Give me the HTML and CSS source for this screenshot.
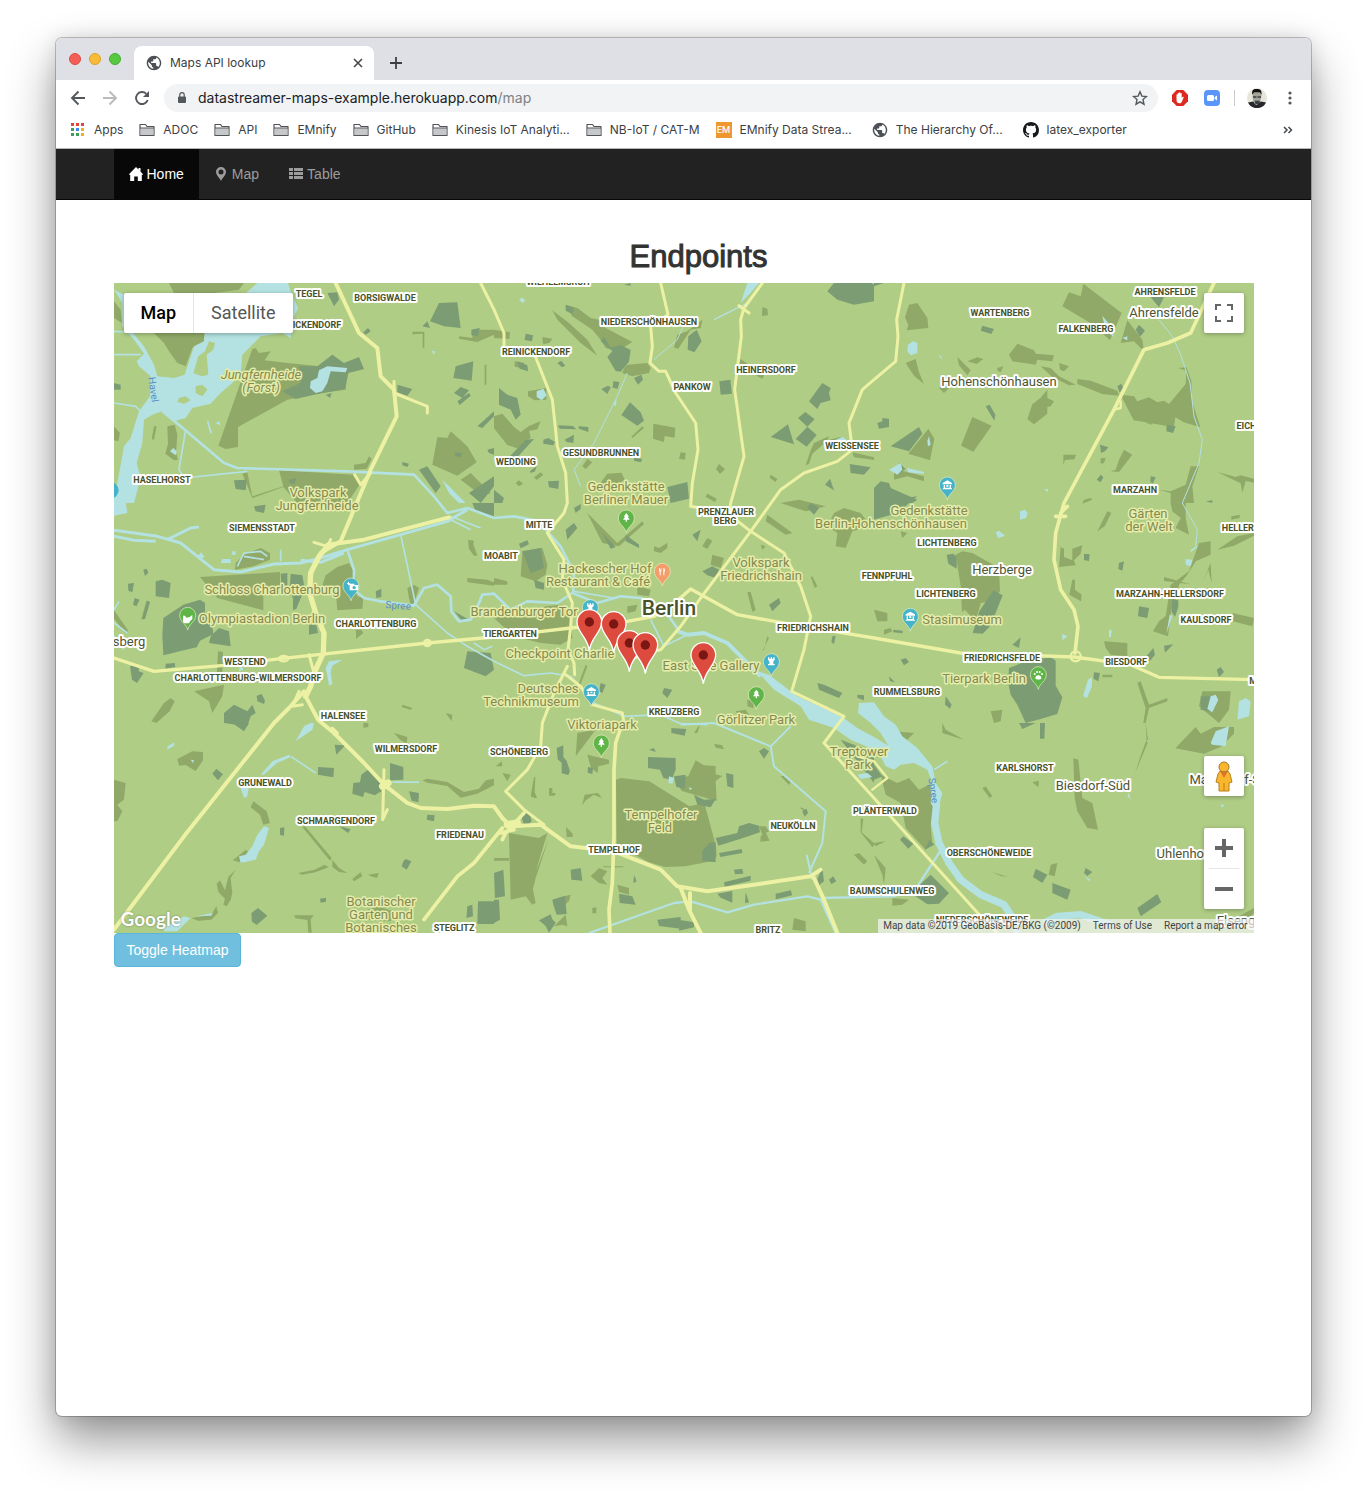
FILE: index.html
```html
<!DOCTYPE html>
<html lang="en">
<head>
<meta charset="utf-8">
<meta name="viewport" content="width=device-width, initial-scale=1">
<title>Maps API lookup</title>
<link rel="stylesheet" href="styles.css">
</head>
<body>
<svg class="defs" width="0" height="0" aria-hidden="true">
  <symbol id="globe" viewBox="1 1 22 22"><path fill="#4d5156" d="M12 2C6.480 2 2 6.480 2 12s4.480 10 10 10 10-4.480 10-10S17.520 2 12 2zm-1 17.930c-3.950-.49-7-3.850-7-7.930 0-.62.08-1.210.21-1.790L9 15v1c0 1.100.9 2 2 2v1.930zm6.900-2.540c-.26-.81-1-1.390-1.900-1.390h-1v-3c0-.55-.45-1-1-1H8v-2h2c.55 0 1-.45 1-1V7h2c1.100 0 2-.9 2-2v-.41c2.930 1.190 5 4.060 5 7.410 0 2.080-.8 3.970-2.100 5.390z"/></symbol>
  <symbol id="folder" viewBox="0 0 16 14"><path d="M1 12.500V1.500h5.500l1.500 2h7v9z" fill="#fff" stroke="#505357" stroke-width="1.200" stroke-linejoin="round"/><path d="M1.600 5.300h12.800v6.600H1.600z" fill="#c6c7c9"/><path d="M1 5h14" stroke="#505357"/></symbol>
  <symbol id="pin" viewBox="-30 -30 60 80" overflow="visible"><path d="M0 44C-4 25-24 20-24 0A24 24 0 0 1 24 0C24 20 4 25 0 44z" stroke="#e9f0c4" stroke-width="2"/></symbol>
  <symbol id="marker" overflow="visible"><path d="M0 0C-5-42-37-54-37-86A37 37 0 0 1 37-86C37-54 5-42 0 0z" fill="#dd4b3e" stroke="#fff" stroke-width="4"/><circle cy="-86" r="14" fill="#7a1712"/></symbol>
</svg>

<div class="window">
  <header class="chrome">
    <div class="tabstrip">
      <div class="lights"><span class="light red"></span><span class="light amber"></span><span class="light green"></span></div>
      <div class="tab">
        <svg width="16" height="16"><use href="#globe"/></svg>
        <span class="tab-title">Maps API lookup</span>
        <button class="plain" aria-label="Close tab"><svg width="10" height="10" viewBox="0 0 10 10"><path d="M1 1l8 8M9 1L1 9" stroke="#45494d" stroke-width="1.600"/></svg></button>
      </div>
      <button class="plain new-tab" aria-label="New tab"><svg width="12" height="12" viewBox="0 0 12 12"><path d="M6 0v12M0 6h12" stroke="#3c4043" stroke-width="1.800"/></svg></button>
    </div>
    <div class="toolbar">
      <button class="plain" aria-label="Back"><svg width="16" height="16" viewBox="0 0 16 16"><path d="M15 8H2M8.500 1.500L2 8l6.500 6.500" fill="none" stroke="#54585d" stroke-width="1.900"/></svg></button>
      <button class="plain" aria-label="Forward"><svg width="16" height="16" viewBox="0 0 16 16"><path d="M1 8h13M7.500 1.500L14 8l-6.500 6.500" fill="none" stroke="#b9bbbe" stroke-width="1.900"/></svg></button>
      <button class="plain" aria-label="Reload"><svg width="16" height="16" viewBox="0 0 16 16"><path d="M13.700 10A6 6 0 1 1 12.300 3.800" fill="none" stroke="#54585d" stroke-width="1.900"/><path d="M15 1v6H9z" fill="#54585d"/></svg></button>
      <div class="omnibox">
        <svg width="12" height="14" viewBox="0 0 12 14"><path d="M3 5.500h6a1 1 0 0 1 1 1V11a1 1 0 0 1-1 1H3a1 1 0 0 1-1-1V6.500a1 1 0 0 1 1-1z" fill="#54585d"/><path d="M3.800 6V3.800a2.200 2.200 0 0 1 4.400 0V6" fill="none" stroke="#54585d" stroke-width="1.200"/></svg>
        <span class="url">datastreamer-maps-example.herokuapp.com<span class="path">/map</span></span>
        <button class="plain" aria-label="Bookmark this page"><svg width="16" height="16" viewBox="0 0 16 16"><path d="M8 1.800l1.900 4.300 4.600.4-3.500 3.100 1 4.600-4-2.400-4 2.400 1-4.600-3.500-3.100 4.600-.4z" fill="none" stroke="#54585d" stroke-width="1.400"/></svg></button>
      </div>
      <div class="extensions">
        <svg width="16" height="16" viewBox="0 0 16 16"><path d="M4.700 0h6.600L16 4.700v6.600L11.300 16H4.700L0 11.300V4.700z" fill="#dc2a22"/><path d="M4.500 8.500V5c0-1 1.200-1 1.200 0V3.600c0-1 1.300-1 1.300 0V3c0-1 1.400-1 1.400 0v.8c0-1 1.300-1 1.300 0V8l.8-1c.8-.7 1.500 0 1 .8L10 11.600C9.300 13 8.700 13.300 7.500 13.300 5.500 13.300 4.500 12 4.500 10z" fill="#fff"/></svg>
        <svg width="16" height="16" viewBox="0 0 16 16"><rect width="16" height="16" rx="4" fill="#5a95f8"/><rect x="3" y="5" width="7" height="6" rx="1.500" fill="#fff"/><path d="M10.600 7.200L13 5.400v5.200l-2.400-1.800z" fill="#fff"/></svg>
        <span class="divider"></span>
        <svg width="20" height="20" viewBox="0 0 20 20"><circle cx="10" cy="10" r="10" fill="#e8e6db"/><path d="M1 14.500l5-1 4 2 4-2 5 1A10 10 0 0 1 1 14.500z" fill="#26282b"/><path d="M5.500 5c0 7 1 11 4 12 3-1 5-5 5-12z" fill="#a3a59b"/><path d="M5 6.500C5 0 8 1 10 1c3 0 5 1 4.500 5.500L13 4.500H7z" fill="#111"/><path d="M6 8.200h3.500v1.500H6zM10.500 8.200H14v1.500h-3.500zM7.500 12.800h5.500L12 16H8.500z" fill="#3c3e40"/></svg>
        <button class="plain" aria-label="Browser menu"><svg width="16" height="16" viewBox="0 0 16 16"><g fill="#54585d"><circle cx="8" cy="3" r="1.600"/><circle cx="8" cy="8" r="1.600"/><circle cx="8" cy="13" r="1.600"/></g></svg></button>
      </div>
    </div>
    <nav class="bookmarks" aria-label="Bookmarks">
      <a href="#" class="apps"><svg width="14" height="14" viewBox="0 0 14 14"><path d="M0 0h3v3H0zM5 0h3v3H5zM10 0h3v3h-3z" fill="#e5443a"/><path d="M0 5h3v3H0zM0 10h3v3H0zM5 10h3v3H5z" fill="#3f9e55"/><path d="M5 5h3v3H5z" fill="#4386f2"/><path d="M10 5h3v3h-3zM10 10h3v3h-3z" fill="#eeb021"/></svg>Apps</a>
      <a href="#"><svg width="16" height="14"><use href="#folder"/></svg>ADOC</a>
      <a href="#"><svg width="16" height="14"><use href="#folder"/></svg>API</a>
      <a href="#"><svg width="16" height="14"><use href="#folder"/></svg>EMnify</a>
      <a href="#"><svg width="16" height="14"><use href="#folder"/></svg>GitHub</a>
      <a href="#"><svg width="16" height="14"><use href="#folder"/></svg>Kinesis IoT Analyti...</a>
      <a href="#"><svg width="16" height="14"><use href="#folder"/></svg>NB-IoT / CAT-M</a>
      <a href="#" class="site"><span class="em">EM</span>EMnify Data Strea...</a>
      <a href="#" class="site"><svg width="16" height="16"><use href="#globe"/></svg>The Hierarchy Of...</a>
      <a href="#"><svg width="16" height="16" viewBox="0 0 16 16"><path fill="#17191c" d="M8 0C3.580 0 0 3.580 0 8c0 3.540 2.290 6.530 5.470 7.590.4.070.55-.17.55-.38 0-.19-.01-.82-.01-1.490-2.010.37-2.530-.49-2.690-.94-.09-.23-.48-.94-.82-1.130-.28-.15-.68-.52-.01-.53.63-.01 1.080.58 1.230.82.72 1.210 1.870.87 2.330.66.07-.52.28-.87.51-1.070-1.780-.2-3.640-.89-3.640-3.950 0-.87.31-1.590.82-2.150-.08-.2-.36-1.020.08-2.120 0 0 .67-.21 2.200.82.64-.18 1.320-.27 2-.27s1.360.09 2 .27c1.530-1.040 2.200-.82 2.200-.82.44 1.100.16 1.920.08 2.120.51.56.82 1.270.82 2.150 0 3.070-1.870 3.750-3.650 3.950.29.25.54.73.54 1.480 0 1.070-.01 1.930-.01 2.200 0 .21.15.46.55.38A8.010 8.010 0 0 0 16 8c0-4.420-3.580-8-8-8z"/></svg>latex_exporter</a>
      <button class="plain more" aria-label="More bookmarks"><svg width="10" height="8" viewBox="0 0 10 8"><path d="M1 1l3 3-3 3M5.500 1l3 3-3 3" fill="none" stroke="#45494d" stroke-width="1.500"/></svg></button>
    </nav>
  </header>

  <nav class="navbar" aria-label="Main">
    <div class="container nav-items">
      <a href="#" class="active"><svg width="14" height="14" viewBox="1 0 14 14"><path d="M8 0l2.500 2.500V1h2v3.500L15.500 7.700h-1.700V14H9.800V9.500H6.200V14h-4V7.700H.5z" fill="currentColor"/></svg>Home</a>
      <a href="#"><svg width="14" height="14" viewBox="0 0 14 14"><path fill-rule="evenodd" d="M7 0a5 5 0 0 1 5 5c0 3-3 5-5 9C5 10 2 8 2 5a5 5 0 0 1 5-5zm0 2.500a2.500 2.500 0 1 0 0 5 2.500 2.500 0 0 0 0-5z" fill="currentColor"/></svg>Map</a>
      <a href="#"><svg width="14" height="14" viewBox="0 0 14 14"><path d="M0 1h4v3H0zM5 1h9v3H5zM0 5h4v3H0zM5 5h9v3H5zM0 9h4v3H0zM5 9h9v3H5z" fill="currentColor"/></svg>Table</a>
    </div>
  </nav>

  <main class="container">
    <h1>Endpoints</h1>
    <div class="map">
      <svg class="map-canvas" viewBox="0 0 1140 650" preserveAspectRatio="xMidYMid slice" role="img" aria-label="Map of Berlin">
        <rect width="1140" height="650" fill="#afcd85"/>
        <svg width="1140" height="650" viewBox="0 0 3420 1950">
          <!-- open land and parks -->
          <g fill="#90a968">
            <path d="M165 0H390L375 20 300 30H180zM0 55L20 80 24 120 0 105zM120 150H272L270 175 235 195 215 250 190 240 165 205 150 180zM415 198L425 195 435 210 470 205 452 232 520 240 620 250 655 215 690 245 750 258 700 270 695 320 620 330 520 350 372 432V492L335 498 313 488zM120 430h8l-8 40-7-2zM160 430l22-5 8 30-4 55 6 20-12 2-26-20 8-30zM0 430l18 20-5 25-13-3zM495 562L720 575 740 600 700 660H550L508 612 415 645 385 572 400 568 415 640 508 610zM720 545l35-5 10-20 8 8-15 30-38 2zM970 462l30 3 10-20 50 45 28 48-58 40-75-33zM895 146h36v48h-5v-42l-30 2zM1035 160l40 5V140h65v15l-50 22-55-10zM1112 245h5v60h-5zM1040 590l30-20 60 60-25 10z"/>
            <g transform="translate(1140)"><path d="M215 65l35 10 40 30 25 5 20 25 80 42-45 28-35-10-15-25-25-30-60-40zM175 82l50 38 55 50 30 48-50-38-70-70zM0 140l48 8-2 20-46-3zM145 162l30 5-8 12-20 5zM62 235l30 5-10 15-20-4zM550 155l30-10 45-35-5 25-30 5-38 58-12-5zM400 245l60-5 10 15-5 15-50 10-30-10 5-15zM102 325l55-10v35l-35 2-20-12zM0 400l25-8 35 40 20 15 25-18 35-15-10 25-25 5 5 20-40 32-30-10-40-50zM478 422l66 12-2 30-30-5-2 18-33-10zM445 430l5 5-35 30-3-4zM340 572l42-3 10 20-30 25-42-15zM280 528l15 10-20 20-10-8zM560 508l15 2-2 20-18-3zM675 543l18 15-15 15-12-15zM140 568l8 8-20 15-8-8zM75 592l12 10-12 8-10-10zM830 575l20 12-5 10-18-12zM640 632l28 15-5 10-28-15zM805 72l15 5 2 20-18 2zM740 228l70 50-5 10-70-42zM960 480l45-20-5 12 40-10 20 25-10 10-20-12-40-3-35 30-10 30-10 5 15-45zM1075 508l65 15v8l-60-8z"/></g>
            <g transform="translate(2280)"><path d="M628 2l115 88-35 82-55-50-88-52 20-42 35 12zM760 112l45 58 5 35-30-30-40 5zM105 65l25-5 30 45 3 30-65 7 5-15-10-25zM95 240l30-12 10 40 15 35-30-25zM430 182l50 20 5 10 55 5-5 18-45-5-5 15-70-10-10-20zM500 250l30 5 25 25 50 25-20 2-50-25zM610 288l40 5 80 30 5 15-50-5-75-30zM740 335l40 5 10 15 35-12 25 15 20-5 15 10 50-60 2-40-25-8 25-2 15 40 2 60 25 80-50-15-25-15-5 35-15-8-105-18zM870 385h30v60l-22-5zM555 240l30 10-15 15-12-5zM250 222l40 40-10 15-25-30zM280 235l30-12 18 5-20 15zM370 255l18-5-8 18-10-5zM520 320v25l20 10-10 15-10 2v20l-40 32-20-15 15-45 25-20zM295 402l58 26-55 78-37-18zM163 437l18 30-13 65-65-20zM195 315l20-10 10 10-15 15zM568 515h38l-5 14-28 2-5 15zM750 500l25 15-40 52-25-2 15-5 10-30zM680 525h15l-5 15-10 2zM820 402l15 3-2 20-15-5zM950 550h25l-20 60 5 50h-70v-35l45-20zM1030 567l55 15 15-5 40 10v12l-25-5-10 35-5-28zM60 560l30 5 60 15v15l-50-15-40 10zM855 620l35 5v5zM630 650l20-5 5 5-30 12z"/></g>
            <g transform="translate(0 660)"><path d="M258 222l240-15v60l-50 5v50L310 285zM670 192l35-12 20 40 5 60 18 5-3 32-75 5-5-60-40-15 10-30zM365 180l25-25 50-20 28 15v20l-50 20-55 10zM0 322l42 60-5 10-37-45zM312 445l15 2-2 70h-17zM240 565l90-20-5 35-30 50-10-35zM150 600l20-15 12 10-15 30-40 35-15-5zM865 605l30 10-5 5-27-8zM995 630l20 5-2 20zM722 380h20l6 10-22 18v-25zM1062 110l18 3-2 10 12 35h-10l-15-20zM1060 225l60 5 20 8v10l-80-10zM880 255l20-10 15 10-15 45-10 5-5-20zM105 295l-18 55-5-2 15-55z"/></g>
            <g transform="translate(1140 660)"><path d="M85 145l60-10 15 50-5 30-30 20-45-15zM0 345l60-10 40 10 55-35 50-5 25 30 5 70-35 20-60-5-80-20zM280 30l90 90 75-65 5 8-75 67-50-10zM480 130l15 5 25-15v15l-20 15-20-5zM640 105l15 8-15 25-15-8zM655 155l35 10-10 30-30-10zM820 35l75 55-20 5-60-40zM1020 30l30-15 50 15 30 40-55 15-20 50-30-5 5-40-30-20zM860 0l55-10 80 20-60 15zM430 250l40 10-5 20-35-5zM400 310l30-5-5 20-25 5zM760 268l10-2 15 55-10 5zM950 222l5-2 15 30-8 5zM820 400l5 5-20 40 5-5zM0 225l40 10v10H0zM275 485l5 5-30 80-5-2zM760 590l20 5-2 20-18-5zM725 625l30-5 10 15-25 10zM800 125l15 5-10 10z"/></g>
            <g transform="translate(2280 660)"><path d="M245 155l20-10 30 5 80 45 3 70-23 30-35 5-8 30-10 20-30-30-8 8-4-80zM560 132l10 5v25l25 10v-35l30-10-5 25-20 20 5 15-50 5zM700 25l12 5-20 40-22 15zM595 230h8v30l20 15-2 20-35-20zM975 120l35-5v40l-45 20-25 40-25 30-8 40-15 35-10 80-45-15 18-30 20-15 15-95 55-40zM870 222l80 22-80-10zM1010 180l3 60-10-40-20 45zM690 415l70 5v40l-50-5-15-20zM1030 140l60-40 50-10v8l-60 30zM1075 330l65 15-5 25-60-15zM890 0h45v45l10 50-40-20 15-30-25-20zM0 320l40 10v25H10zM30 380l20-5 5 10-25 10zM985 565h85l-5 55-30 40-60-50zM790 540l10-5 25 70 55-20v10l-55 20-10 45h-7l7-45zM685 515h30v8h-30zM1072 40l25-5v10l-25 5zM80 85l20 5-15 15zM350 625l35-5-5 35-20 5z"/></g>
            <g transform="translate(0 1320)"><path d="M190 108l45-23 32 2v25l-22 32-30-18-20 2zM0 170l35 10-5 50-20 15 15 20-15 30H0zM418 235l40 30 10 35-20 5-10-30-28-22zM356 412l40-32 10 10-20 30zM365 440l-15 25 5 45-5 20-12 20-10-5 5-18-20-20-5-25 10-10 15 30 10-40zM232 585l60-10 15-25 5 20-20 20-40 3zM565 312l8-2 80 95-5 8zM655 410l20 25 25 15-25-3-20-15zM552 450l50-10 30-15 12 8-40 15-40 7zM715 468l25-20 5 12-25 15zM762 455l32-5-5 15-18-5zM925 172l15-5 60 10 50 30 45-10 20-25 25-5v20l-50 25-50 12-40-35-60-10zM840 30l40 12-2 20-20-12zM540 577h60l-10 12 3 40h-10l-3-38-35-5zM760 560l35-10 40 15-5 30-70-5zM748 0h15v12l-15 2z"/></g>
            <g transform="translate(1140 1320)"><path d="M366 170l15-5 85 10 120 75 45-10 35 130 2 30-15 15-80 15-60 2-50-15-95-50zM605 112l25 15 35 2v25l20 5-20 15 3 60-105-30-20-35 40-10zM45 330l90 15 25-15-30 100-15 60 10 50-10 5-20-25-45 10zM165 345l-40 120-20 80 15-85zM250 30l55-10-60 80zM280 95l65 15v12l-32 8-2 20-20-15zM272 215l40-5 12 15-25-10-25 18-10 15zM260 262l10 20zM370 485l35 10v20l-30-8zM290 460l25-25 25 10-15 20 15 20-25-5zM210 520l20-5-5 20-30 25zM215 575l5 35-15-5-25 5 15-15zM900 585l35 10v30l-40-5zM915 252l15 5 15 20zM800 340l15-12 12 25-28 3zM1080 395l15-5 25 25-10 10zM860 160l10-2 20 20-5 8zM660 62l25 5 5 12-25-5zM110 220l10-58h4l-2 45 7 18h-8zM5 130l18-15 2 15zM25 150l25 5-10 20zM165 195h10v15h10l-3 8h-17zM216 312l20 20v10h-18zM295 555l12-2v18h-12zM600 30l20-30-10 30zM328 430h60v3h-60zM0 405h45v8H0zM1100 285l8 3-5 40 40 35-8 10-35-45zM795 310h20l10 15-20 10z"/></g>
            <g transform="translate(2280 1320)"><path d="M20 155l50 25 35-15 30 35 30-15 15 60-10 65 5 50-20 20-60-65-15-75-45-25zM598 105l15 5 12 115 30 15 17 80-32-5-30-50-8-40zM965 12l15 20 40-20h60v20l-40 40-50 20-86-16zM205 0l10 20 55 30-65-20zM475 178l20-5-2 20zM325 195l10-5 20 30-8 5zM60 25l60 5-20 20-40-10zM355 448l45 13-20-2zM530 425l20-5-8 40-18-5zM0 360l35-5-30 15zM0 395l35 40-5 50-5-30zM55 525l50 5-20 15-30 3zM1075 590l65-35v15l-30 30-20 5zM815 0l8 55-25 60-15 35 20-60 15-40z"/></g>
          </g>
          <!-- woods and cemeteries -->
          <g fill="#7c9d74">
            <path d="M555 250h55l45-35 35 25 45-18 15 36-47 12-10 48-93 17-55 13-40-23 55-25zM948 115l27-55 55-2 10 77-50-5zM925 130l15-15 8 20zM1025 250l53-15-5 58-55-8zM1020 330l20-18 25 10-20 23zM1030 355l35-25 5 8-33 28zM640 30l30-2 5 22-15 20zM748 148l14-13 8 10-15 10zM850 305l45 13-15 20-30-10zM360 592l38-2-3 32-30-4zM1090 430l50-45v15l-35 35zM915 560l25-10 40 60-15 20zM1120 500l20-5v20l-15-5zM1065 630l75-50v30l-40 50zM635 335l18-5-5 15zM525 590l22-5-5 18-15-3zM865 537l20 5-5 10-15-5zM1072 140l25-5-5 25-20-3zM0 300l20 5v15H0zM1022 508l22 3-5 12-16-4z"/>
            <g transform="translate(1140)"><path d="M340 222l15-18-35-30 10-12 20 32 30-8 30 15-5 35-25 30-15-2zM215 65l25 10-5 18-20-10zM95 152l22 5-3 18-22-4zM15 315l25 20 30 10 10 50-15 15-15-30-35-15zM120 468l-50 55H45L95 470zM70 235l30 12 2 18-25-8zM190 240l12-7 12 15-10 5zM420 285l22-10 5 15-15 15zM322 318l20-10 8 5-10 20zM358 295l18 2-5 20-15-3zM408 358l32 30 10 25-20 15-48-32zM583 160l25-20 15 35-22 33-20-8zM676 295l33-5 5 42-34 3zM192 427l45 2 10 10-50-2zM253 430l30 2v15l-28-10zM212 470l28-15-2 25-20-3zM148 470l15-5 20 12-5 10-30-5zM162 595l33-2-2 25-28-5zM520 612l60-15 5 50-55 13zM945 355l40-55 25 15-5 15 5 22-30 8-10 18zM912 405l22-18 28 22-22 22zM830 462l52-38 18 60zM905 468l35-37 28 25-30 35zM1000 25l20-25h60l45-5 15 10v50l-60 10-50-15zM1067 543l63 10-20 22-40-5zM993 605l15-18 12 35zM420 525l25 3-5 10-20-5zM108 565l20-15-5 15-12 5zM0 620l30 25-5 15H0zM390 5l20-5v8z"/></g>
            <g transform="translate(2280)"><path d="M810 18l75-5-30 60zM325 128l35 10-8 15-32-10zM785 140l10-15 18 18-15 18zM50 490l85-58 10 20-40 53zM10 420l15-5v-10l20 2v25l-30 5zM335 370l12-5 17 30-3 18zM20 595l25 5 5 15 80 35-15 10H0v-45zM880 425l25 5-8 20-20-5zM678 485l25 8-10 12-12 5zM668 590l12-15 8 8-8 15zM830 580l15 3-8 18-8-3zM730 310l12-8 5 12-10 15zM75 540l20 18-15 10-10-12zM995 655l20-3v8zM0 0h30L0 10z"/></g>
            <g transform="translate(0 660)"><path d="M148 345l60-40 50-15 15 10v50l20 8 5 35-40 20-10 20-45 10-30 8-25 6-3-62zM125 235l20-5 25 10-5 45-40-5zM315 375l30 10 5 45-65-10 5-20zM42 242l18-2-5 28-12-5zM88 200l10-3 5 12-10 10zM62 285l15 5-10 20-10-5zM85 348l15-55 8 5-15 50zM48 490l28-5-2 20 15 5-20 30-15-10zM155 482l27-2 2 12-30 5zM330 630l30-25 40 20 15-20 10 25-15 10-10 30-70-10zM428 578l15-5 10 20-3 10-20-8zM530 212l35 5 7 40-25 60-10 5v-35l-10-30zM500 212l20-2v38l-18-5zM585 365h22l5 25-27 5zM785 265l17-8v25l-15 3zM1060 445l70 5 10 50-25 20-65-25zM1075 0h65v40l-55-15zM1020 325l45 25-20 5zM420 10l35-5-5 25-25-5z"/></g>
            <g transform="translate(1140 660)"><path d="M85 145l55-10 10 60-40 15zM215 80l25-20 10 15-30 35zM240 15l20-12v15l-15 12zM75 122l25-10 5 12-25 12zM325 90l40 42-15 5zM395 95l40 30v10l-40-20zM595 95l25-15-10 35zM625 205l30-15 20 10-10 25-25-8zM825 305l30-20 5 15-25 25zM940 15l10-15 25 15-15 20zM510 555l25 5-15 25-15-15zM320 540l15 5-10 25-10-5zM970 540l20 5 55 25-10 15-60-25zM1090 575l20 2v15l-20-8zM120 230l30 10v20l-25-5zM1015 400l10-2-5 25-8-5z"/></g>
            <g transform="translate(2280 660)"><path d="M405 495l50-20 75-12 15 10v75l20 35-15 50-50 15-45 12-25-55-20-30-8-38zM358 262l28 15-20 50-20 45-20 20-30-2 20-65zM218 155l20-3 10 10v35l-25-15zM630 152l17 2-2 20-15-3zM735 180l15-5-5 28-12-5zM795 310l30 5-5 30-28-5zM895 290l18 2v20l-10 30-10-15zM870 428l28-4-25 25zM808 470l30-35 5 20-15 18zM1028 500l12-8 10 15-15 15zM80 470l15-5 10 12-15 10zM45 520l18 18-15-3zM215 580l18 25-5 12-15-12zM415 425l25-22-5 32zM660 508l18 2-5 25-15-8zM980 580h30l-5 45-25-5zM0 0l130-20-60 50-70 20zM58 380l28 3v8l-28-3z"/></g>
            <g transform="translate(0 1320)"><path d="M295 152l12-15 20 17-15 18zM355 0h50l-15 25zM662 65l32 2-27 28zM612 132l48 3-2 28-46-8zM742 155l20-15 20 5 22 45-2 15-20 12-30-10-5 15-32-10 3-32 20-2zM828 120l40 12v38l-40 2zM885 205l30 5-2 28-20-5zM940 275l22 2-2 18-22-5zM498 315l13-2-1 25-12-2zM412 570l20-15 28 23-32 28-14-10zM618 527l18-3v12l-16 3zM868 415l7-7 17 7-14 25-15-10zM1060 550l15-5 2 35-20 5zM1092 535h48v68h-50zM675 310l35 8-8 12z"/></g>
            <g transform="translate(1140 1320)"><path d="M462 102l83 3v35l-12 30-25-5-10-25-36-5zM540 160l35-5-3 42-25-5-5-22zM600 215l30 15 35-2-15 25-40-8zM696 150l22 5v40l-18-5zM188 75l20-8v35l10 12 10 30-5 12-20-5v-32l-12-10zM282 132l15 3-2 18-14-4zM665 345l65-15 5-20 30-10 30 8 3 20-60 20-65 20zM675 390l68-12 2 12-66 12zM625 385l20-25 20-2v60l-40-5zM690 478l80-20v15l-78 18zM720 440l25-3 3 15-25 2zM755 508l10 30-12 2zM670 512l45-8v35l-35-15zM845 512l45-10 5 15-50 12zM375 512l40 8 10 25-48-5zM420 455l8 20-10 5zM230 440l30-5 5 38-33-3zM175 530l38-12 5 55-30 2-10-30zM135 592l35-18 5 15 10 10-20 30-10-20zM490 590l70-8v35l-65-8zM555 590l45 8v15l-45 10zM0 530h15l3 60-18 10zM0 450l28-10 5 80-30 5zM795 85l15-10 15 10-15 22zM925 265l12-8 5 12-10 12zM985 435l5 40-15 12-5-20zM1005 470l12-10 10 15-15 8zM532 15l45 3-5 20-40-8zM465 80l15-5 5 12zM80 275l25-10 8 30-20 20zM1040 50l40 15 60 25v90z"/></g>
            <g transform="translate(2280 1320)"><path d="M110 510l60-55 55 55-30 32-35 2zM485 437l35 18-15 25-28-18zM535 480l55 20-10 30-45-20zM630 450l5-15 20 12-15 12zM790 555l60-42 12 25-62 42zM78 350l10-10 30 22-15 15zM152 380l15-30 14 15zM498 0h15l-2 47h-13zM435 0h50l-40 18zM0 125l25 35-25 10z"/></g>
          </g>
          <!-- rivers, canals and lakes -->
          <g fill="#b4e1e1">
            <path d="M0 20L25 60V130L60 170 90 212 68 235 75 250 110 280 108 340 75 385 50 465 30 490 10 600 0 640V660H60L80 585 68 540 85 480 90 410 115 395 145 385 180 415 215 405 235 375 290 362 320 330 355 300 380 275 385 215 440 160 505 150 530 165 535 110 552 75 530 25 522 0H430L385 40 360 150H272L270 175 240 190 212 275 180 285 130 280 120 245 90 190 40 130V40zM640 250l60 5-5 13-45-3-10 35-15 25-20 5-17-15 2-20 20-10 5-23zM282 410l12 40-5 2-10-35zM305 422l10-8 5 12zM168 505l10-10 10 10-3 12zM953 203l10 2-3 10zM985 590l20 20 50 50h-20l-30-30z"/>
            <path fill="#afcd85" d="M285 175l18 5-5 20-20 15 5 60-20 5-25-10 15-50 20-15zM245 310l20-5 15 15-15 20-20-10zM195 345l20-5 15 12-20 10-20-5z"/>
            <path d="M1215 48l12-4 6 10-8 6zM1268 325l20-8 10 20-15 15-15-10zM1900 0h35l-25 30-30 30zM1500 358l8-10-2 18-5 4zM2165 470l20-8 15 10-10 8zM2382 185l15-10 13 5v30l-20 7-10-12zM2473 217l8 2 5 12zM2965 98l25 30 10 35-25-20zM3025 165l15-5v12zM2440 475l5-15 5 25-8 5zM2325 560l35-20 5 20-15 15zM2380 555l50 12v6l-48-5zM2790 620l12-3v10z"/>
            <path d="M2718 685l15-5 8 10-5 15-18 5zM2645 748l10-5 18 15-20 8zM3230 800l20-12v5l-20 15zM3215 828l20 2-5 20-15-5zM3175 998l-18 55 10-58zM2845 1052l15 8-15 12zM2922 1190l12-8v28l-15 35-12-5zM3290 1240l15-5 8 15-18 38-15-10zM3375 1255l20-10 15 10-5 45-35 10zM2985 1040h8l-2 22h-6zM635 1155l10-20 40-5-30 18-5 20 5 35-10 5-5-30zM375 1165l5-25 8 20zM325 828h25v12h-30zM355 805h10v10h-12zM250 820l12-12 10 15-20 5zM0 660l35-5 5 35-40 8z"/>
            <path d="M570 1330l20-10h10l-5 20-50 35zM440 1475l35-40 50-20 5 8-42 17-38 35zM380 1515l25-5-5 30-10 5zM450 1630l15 5-15 50-15 20-10 25-45 10-5-20 20-5 20-25 15-35zM160 1390l22-12-2 10-20 12zM230 1430l10 2-3 8zM248 1900l48-10-4 8zM150 1935l60-35 20 5-40 40h-40zM835 1495h80v5h-80zM680 1517l15 2zM1665 1480l15 5-5 17-12-2zM1725 1512l10 5-8 4z"/>
            <path d="M1930 1165L1965 1175 2050 1240 2140 1280 2190 1306 2230 1335 2280 1362 2330 1392 2320 1418 2280 1400 2210 1370 2160 1335 2085 1310 2060 1270 1980 1220zM2235 1260L2280 1258 2310 1300 2345 1325 2365 1360 2410 1395 2455 1450 2465 1500 2485 1530 2470 1590 2450 1560 2455 1500 2440 1460 2400 1440 2360 1445 2340 1460 2315 1450 2300 1420 2330 1400 2300 1350 2270 1320 2232 1290zM3290 1380l15-35 40-15-10 60-40-5zM3045 1530l5 20-10-12zM2910 1780l20 10-5 4zM3320 1568l5-5 5 5-5 5zM3100 1370l5 5-5 3zM2230 1475l30-5 15 12-35 6z"/>
          </g>
          <g fill="none" stroke="#b4e1e1" stroke-linejoin="round">
            <path stroke-width="8" d="M145 385L200 430 330 540 370 555 700 565 900 575 960 640 1000 690 1060 675 1140 705 1200 700 1280 715M1295 740L1340 790 1380 870 1377 930"/>
            <path stroke-width="5" d="M215 440L195 560 210 585 400 565M0 360L65 370 85 390M0 215L80 215M0 145L40 147M1010 700l90 35M1010 710l60 30M1380 925L1500 945"/>
            <path stroke-width="9" d="M0 742L130 760 200 780 250 820 300 860 380 867 480 843 560 840 620 825 700 800 860 755 1000 715 1060 680M0 760L60 772 125 775M160 770L230 735 255 732M560 832L620 838 690 810"/>
            <path stroke-width="8" d="M700 800L720 860V920L750 945 800 955 900 968 930 915 970 905 1010 940 1012 985 1035 1015 1070 1010 1095 960 1105 935 1140 932 1190 980 1240 955 1330 960 1375 930 1450 960 1520 940 1580 945 1650 980 1700 1050"/>
            <path stroke-width="12" d="M1690 1045L1720 1055 1770 1050 1840 1080 1940 1180"/>
            <path stroke-width="5" d="M860 755L905 965 1000 1050 1060 1090 1140 1135 1230 1178 1310 1170 1370 1180 1440 1260 1530 1300 1640 1295 1700 1322 1780 1325M1610 1010L1650 1090 1720 1055"/>
            <path stroke-width="6" d="M1700 1325L1800 1320 1970 1390 2030 1330M1970 1390L1980 1450 2135 1585 2125 1680 2085 1770M2078 1715L2095 1790"/>
            <path stroke-width="7" d="M1425 1950L1680 1860 1730 1855 1840 1888 1920 1865 2080 1840 2120 1850 2165 1950M2120 1845L2340 1840 2410 1810 2485 1695"/>
            <path stroke-width="22" d="M2468 1560L2462 1620 2475 1680 2505 1740 2540 1790 2600 1835 2670 1865 2700 1910 2710 1950M2790 1920L2830 1900 2900 1895 3000 1930"/>
            <path stroke-width="4" d="M1800 110L1860 80 1900 60"/>
            <path stroke-width="3" d="M1620 230L1690 170 1705 135M1540 270L1510 340 1440 480 1380 560 1400 610M3135 110L3175 160 3200 215 3228 300 3240 400 3265 470 3255 540 3205 660 3250 740 3245 790"/>
            <path stroke-width="5" d="M530 1420l60 40 15 10M370 850l20-40 50-5 20 15M390 820l60 10M0 980l15-25M0 1020l40 30M0 1060l30 40M1080 1080l30 20 25-10M2460 1460l40-25M500 800v35"/>
          </g>
          <!-- trunk roads -->
          <g fill="none" stroke="#edf1a4" stroke-linejoin="round" stroke-linecap="round">
            <path stroke-width="12" d="M665 0L735 150 790 195 800 280 840 320 848 400 770 560 680 775 620 810"/>
            <path stroke-width="9" d="M840 295V330L940 370V390M722 575L740 605 770 570M600 778L640 790 650 770"/>
            <path stroke-width="16" d="M640 790L615 820 590 870 587 930 605 990 630 1050 628 1110 605 1160 590 1210 575 1240"/>
            <path stroke-width="12" d="M640 785L750 770 1005 703M575 1240L612 1310 660 1350 750 1440 810 1505 880 1560 920 1575 1000 1578 1080 1568 1140 1570 1165 1605 1190 1630 1280 1625 1370 1690 1500 1705 1640 1760 1690 1810 1780 1825 1920 1805 2090 1780 2120 1760M570 1225L525 1275 480 1320 210 1660 0 1940"/>
            <path stroke-width="9" d="M555 1225L535 1270 565 1265M585 1115L600 1170M810 1460L806 1610 820 1580M655 1335L670 1350"/>
            <path stroke-width="10" d="M0 1125L120 1165 330 1147 500 1127 940 1080 1140 1062 1370 1035 1540 1015 1620 1000 1670 970 1730 918 1870 995 2020 1022 2280 1065 2540 1110 2880 1122 3050 1145 3135 1183 3420 1190"/>
            <path stroke-width="9" d="M1100 0L1140 80 1170 150V210H1260L1315 350 1330 490 1355 570 1360 660 1350 690 1300 750 1350 830 1345 890 1375 960 1370 1030 1362 1100 1380 1140 1382 1175M1360 1150L1320 1230 1285 1320 1280 1390 1240 1460 1175 1525 1230 1580 1290 1625M1355 1175L1400 1210 1435 1265 1525 1290 1530 1320"/>
            <path stroke-width="11" d="M1525 1320L1505 1380 1500 1460V1660L1495 1800 1485 1880 1488 1950M1165 1635L1080 1740 1030 1780 930 1910M1160 1650L1200 1640M1165 1670L1175 1650 1230 1590"/>
            <path stroke-width="9" d="M1640 0L1662 95 1610 130 1615 190 1608 240 1635 265H1655L1685 330 1745 420 1752 500 1735 600 1730 670 1840 690 1910 745 2010 810 2060 910 2090 1000 2070 1100 2033 1225 2190 1300 2130 1380 2280 1545 2600 1900 2650 1950"/>
            <path stroke-width="9" d="M1945 0L1890 75 1880 110 1882 160 1862 320 1890 520 1850 660 1845 700M1875 68L1905 90M2370 0L2348 110 2352 160 2345 235 2280 290 2245 320 2205 420 2215 500 2170 535 2070 570 2000 620 1910 745 1760 945 1700 1030 1640 1100 1560 1125"/>
            <path stroke-width="11" d="M3300 0L3230 150 3160 180 3090 200 3000 380 2850 660 2825 750 2820 830 2840 920 2880 980 2892 1030 2883 1110M2840 690L2860 670M2825 700h30"/>
            <path stroke-width="7" d="M3000 380l20-5v-20M2870 1120a15 15 0 1 0 30 0a15 15 0 1 0-30 0M495 1127a14 8 0 1 0 28 0a14 8 0 1 0-28 0M930 1080a10 9 0 1 0 20 0a10 9 0 1 0-20 0M2230 1420l50 15 40 50-45 35"/>
            <path stroke-width="12" d="M2100 1785L2130 1850 2170 1950M1700 1815L1725 1880 1760 1950M1728 1830V1880"/>
            <path stroke-width="22" d="M1180 1625L1210 1620M806 1510L822 1500"/>
          </g>
          <!-- points of interest -->
          <g fill="#45b3c9">
            <use href="#pin" x="2470" y="576" width="60" height="80"/><use href="#pin" x="681" y="879" width="60" height="80"/><use href="#pin" x="1399" y="944" width="60" height="80"/><use href="#pin" x="1402" y="1196" width="60" height="80"/><use href="#pin" x="1942" y="1106" width="60" height="80"/><use href="#pin" x="2359" y="970" width="60" height="80"/><circle cx="-10" cy="622" r="24"/>
          </g>
          <g fill="#5fb548">
            <use href="#pin" x="191" y="967" width="60" height="80"/><use href="#pin" x="1507" y="675" width="60" height="80"/><use href="#pin" x="1897" y="1205" width="60" height="80"/><use href="#pin" x="1432" y="1350" width="60" height="80"/><use href="#pin" x="2743" y="1145" width="60" height="80"/>
          </g>
          <g fill="#f59c6b"><use href="#pin" x="1615" y="835" width="60" height="80"/></g>
          <g fill="#fff" transform="translate(0 -2)">
            <path id="museum" d="M2500 594l14 8v4h-28v-4zM2489 608h4v8h14v-8h4v10h3v3h-28v-3h3zM2497 608h6v5h-6z"/>
            <use href="#museum" x="-1068" y="620"/><use href="#museum" x="-111" y="394"/>
            <path fill-rule="evenodd" d="M705 904h16v4h12v16h-26v-16h-2zM720 911a5 5 0 1 0 1 0zM699 902h3v-4h3v4h4v3h-4v4h-3v-4h-3z"/>
            <path d="M1419 963h4v4h4v-4h4v4h4v-4h4v8l-4 4v8h-12v-8l-4-4zM1962 1125h4v4h4v-4h4v4h4v-4h4v8l-4 4v8h4v4h-20v-4h4v-8l-4-4z"/>
            <path id="tree" d="M1537 692l8 11h-4l6 9h-8v6h-4v-6h-8l6-9h-4z"/>
            <use href="#tree" x="390" y="530"/><use href="#tree" x="-75" y="675"/>
            <path d="M207 1000h6l4 6 10-2 8-6v12l-6 6-4 7h-14l-4-5zM2764 1188c0-5 4-9 9-9s9 4 9 9-18 5-18 0z"/><circle cx="2762" cy="1175" r="3"/><circle cx="2769" cy="1169" r="3"/><circle cx="2777" cy="1169" r="3"/><circle cx="2784" cy="1175" r="3"/>
            <path d="M1636 857h2v6h2v-6h2v9l-2 2v11h-3v-11l-2-2zM1648 857c4 0 5 3 5 9l-2 3v10h-3z"/>
          </g>
        </svg>

        <g transform="translate(-114 -283)">
          <g class="poi" text-anchor="middle">
            <g font-style="italic"><text x="261" y="379">Jungfernheide</text><text x="261" y="392">(Forst)</text></g>
            <text x="318" y="497">Volkspark</text><text x="317" y="510">Jungfernheide</text>
            <text x="626" y="491">Gedenkstätte</text><text x="626" y="504">Berliner Mauer</text>
            <text x="272" y="594">Schloss Charlottenburg</text>
            <text x="262" y="623">Olympiastadion Berlin</text>
            <text x="605" y="573">Hackescher Hof</text><text x="598" y="586">Restaurant &amp; Café</text>
            <text x="524" y="616">Brandenburger Tor</text>
            <text x="560" y="658">Checkpoint Charlie</text>
            <text x="711" y="670">East Side Gallery</text>
            <text x="548" y="693">Deutsches</text><text x="531" y="706">Technikmuseum</text>
            <text x="602" y="729">Viktoriapark</text>
            <text x="756" y="724">Görlitzer Park</text>
            <text x="761" y="567">Volkspark</text><text x="761" y="580">Friedrichshain</text>
            <text x="929" y="515">Gedenkstätte</text><text x="891" y="528">Berlin-Hohenschönhausen</text>
            <text x="962" y="624">Stasimuseum</text>
            <text x="984" y="683">Tierpark Berlin</text>
            <text x="1148" y="518">Gärten</text><text x="1149" y="531">der Welt</text>
            <text x="859" y="756">Treptower</text><text x="858" y="769">Park</text>
            <text x="661" y="819">Tempelhofer</text><text x="660" y="832">Feld</text>
            <text x="381" y="906">Botanischer</text><text x="381" y="919">Garten und</text><text x="381" y="932">Botanisches</text>
          </g>
          <g class="river" text-anchor="middle">
            <text transform="translate(150 390) rotate(82)">Havel</text>
            <text transform="translate(398 609) rotate(4)">Spree</text>
            <text transform="translate(930 791) rotate(82)">Spree</text>
          </g>
          <g class="district" text-anchor="middle">
            <text x="309" y="297">TEGEL</text><text x="385" y="301">BORSIGWALDE</text><text x="307" y="328">REINICKENDORF</text><text x="162" y="483">HASELHORST</text>
            <text x="558" y="285">WILHELMSRUH</text><text x="649" y="325">NIEDERSCHÖNHAUSEN</text><text x="536" y="355">REINICKENDORF</text><text x="692" y="390">PANKOW</text><text x="766" y="373">HEINERSDORF</text>
            <text x="601" y="456">GESUNDBRUNNEN</text><text x="516" y="465">WEDDING</text><text x="852" y="449">WEISSENSEE</text>
            <text x="1000" y="316">WARTENBERG</text><text x="1165" y="295">AHRENSFELDE</text><text x="1086" y="332">FALKENBERG</text><text x="1249" y="429">EICHE</text><text x="1135" y="493">MARZAHN</text>
            <text x="262" y="531">SIEMENSSTADT</text><text x="539" y="528">MITTE</text><text x="501" y="559">MOABIT</text><text x="376" y="627">CHARLOTTENBURG</text><text x="510" y="637">TIERGARTEN</text>
            <text x="245" y="665">WESTEND</text><text x="248" y="681">CHARLOTTENBURG-WILMERSDORF</text><text x="343" y="719">HALENSEE</text>
            <text x="726" y="515">PRENZLAUER</text><text x="725" y="524">BERG</text><text x="813" y="631">FRIEDRICHSHAIN</text><text x="674" y="715">KREUZBERG</text>
            <text x="947" y="546">LICHTENBERG</text><text x="887" y="579">FENNPFUHL</text><text x="946" y="597">LICHTENBERG</text><text x="1170" y="597">MARZAHN-HELLERSDORF</text><text x="1206" y="623">KAULSDORF</text><text x="1252" y="531">HELLERSDORF</text>
            <text x="1002" y="661">FRIEDRICHSFELDE</text><text x="1126" y="665">BIESDORF</text><text x="907" y="695">RUMMELSBURG</text><text x="1276" y="684">MAHLSDORF</text>
            <text x="265" y="786">GRUNEWALD</text><text x="406" y="752">WILMERSDORF</text><text x="519" y="755">SCHÖNEBERG</text><text x="336" y="824">SCHMARGENDORF</text><text x="460" y="838">FRIEDENAU</text><text x="454" y="931">STEGLITZ</text>
            <text x="614" y="853">TEMPELHOF</text><text x="793" y="829">NEUKÖLLN</text><text x="768" y="933">BRITZ</text><text x="885" y="814">PLÄNTERWALD</text><text x="1025" y="771">KARLSHORST</text><text x="989" y="856">OBERSCHÖNEWEIDE</text><text x="892" y="894">BAUMSCHULENWEG</text><text x="982" y="923">NIEDERSCHÖNEWEIDE</text>
          </g>
          <g class="town" text-anchor="middle">
            <text x="1164" y="317">Ahrensfelde</text><text x="999" y="386">Hohenschönhausen</text><text x="1002" y="574">Herzberge</text><text x="1093" y="790">Biesdorf-Süd</text>
            <text x="129" y="646">sberg</text><text x="1232" y="784">Mahlsdorf-Süd</text><text x="1188" y="858">Uhlenhorst</text><text x="1249" y="925">Elsengrund</text>
          </g>
          <text class="city" x="669" y="615" text-anchor="middle">Berlin</text>
        </g>
        <svg width="1140" height="650" viewBox="0 0 3420 1950">
          <use href="#marker" x="1426" y="1103"/><use href="#marker" x="1499" y="1109"/><use href="#marker" x="1546" y="1166"/><use href="#marker" x="1594" y="1172"/><use href="#marker" x="1768" y="1202"/>
        </svg>
      </svg>

      <div class="map-types"><button class="on">Map</button><button>Satellite</button></div>
      <button class="control fullscreen" aria-label="Toggle fullscreen view"><svg width="18" height="18" viewBox="0 0 18 18"><path d="M1 6V1h5M12 1h5v5M17 12v5h-5M6 17H1v-5" fill="none" stroke="#666" stroke-width="2"/></svg></button>
      <button class="control pegman" aria-label="Street View"><svg width="18" height="31" viewBox="0 0 18 31"><path d="M5 10h8l2 3 2 8-3 1v8H4v-8l-3-1 2-8z" fill="#fab62d" stroke="#b8811b"/><path d="M5 10h8l-4 7z" fill="#e0722a"/><path d="M9 22v8" stroke="#b8811b"/><circle cx="9" cy="6" r="5" fill="#fab62d" stroke="#9f7a2a"/></svg></button>
      <div class="control zoom">
        <button aria-label="Zoom in"><svg width="18" height="18" viewBox="0 0 18 18"><path d="M9 0v18M0 9h18" stroke="#666" stroke-width="4"/></svg></button>
        <button aria-label="Zoom out"><svg width="18" height="18" viewBox="0 0 18 18"><path d="M0 9h18" stroke="#666" stroke-width="4"/></svg></button>
      </div>
      <a class="google" href="#">Google</a>
      <div class="attribution"><span>Map data ©2019 GeoBasis-DE/BKG (©2009)</span><a href="#">Terms of Use</a><a href="#">Report a map error</a></div>
    </div>
    <button class="btn">Toggle Heatmap</button>
  </main>
</div>
</body>
</html>
```
FILE: styles.css
```css
* { box-sizing: border-box; }

body {
  margin: 0;
  min-height: 100vh;
  padding: 38px 56px 74px;
  display: flex;
  background: #fff;
  color: #333;
  font: 14px/20px "Liberation Sans", Arial, sans-serif;
}

a { color: inherit; text-decoration: none; }
svg { display: block; flex: none; }
button { font: inherit; cursor: pointer; }
.defs { position: absolute; }

.plain {
  display: flex;
  align-items: center;
  justify-content: center;
  padding: 0;
  border: 0;
  background: none;
}

.window {
  flex: 1;
  min-width: 0;
  overflow: hidden;
  background: #fff;
  border-radius: 6px;
  box-shadow: 0 0 0 1px rgba(0, 0, 0, .22), 0 24px 48px rgba(0, 0, 0, .42), 0 0 20px rgba(0, 0, 0, .12);
}

/* Browser chrome */
.chrome {
  border-bottom: 1px solid #b6b6b6;
  color: #3c4043;
  font: 12px/16px Inter, sans-serif;
}

.tabstrip {
  display: flex;
  height: 42px;
  padding-left: 13px;
  background: #dfe0e6;
}

.lights { display: flex; gap: 8px; padding-top: 15px; width: 65px; }
.light { width: 12px; height: 12px; border-radius: 50%; }
.red { background: #f35f57; border: 1px solid #de4b43; }
.amber { background: #f8bb38; border: 1px solid #dfa12a; }
.green { background: #57c840; border: 1px solid #43ad2f; }

.tab {
  display: flex;
  align-items: center;
  gap: 8px;
  width: 240px;
  height: 34px;
  margin-top: 8px;
  padding: 0 11px 0 12px;
  background: #fff;
  border-radius: 8px 8px 0 0;
}

.tab-title { flex: 1; }
.new-tab { margin: 9px 0 0 16px; height: 32px; }

.toolbar {
  display: flex;
  align-items: center;
  height: 36px;
  padding: 0 14px;
  gap: 16px;
}

.omnibox {
  flex: 1;
  display: flex;
  align-items: center;
  gap: 10px;
  height: 28px;
  margin-left: -2px;
  padding: 0 10px 0 12px;
  border-radius: 14px;
  background: #f1f3f4;
  color: #202124;
  font-size: 14px;
}

.url { flex: 1; }
.path { color: #7d8286; }
.extensions { display: flex; align-items: center; gap: 16px; margin-left: -2px; }
.divider { width: 1px; height: 16px; margin: 0 -4px 0 -2px; background: #c8cacd; }
.extensions .plain { margin: 0 -1px; }

.bookmarks {
  display: flex;
  align-items: center;
  height: 32px;
  padding: 0 18px 4px 15px;
  gap: 16px;
  white-space: nowrap;
}

.bookmarks a { display: flex; align-items: center; gap: 8px; }
.bookmarks .apps { gap: 9px; }
.bookmarks .site { margin-right: 4px; }
.em { width: 16px; background: #ee972e; color: #fff; font-size: 9px; font-weight: 500; text-align: center; }
.more { margin-left: auto; }

/* Site */
.navbar { background: #222; border-bottom: 1px solid #080808; }
.container { width: calc(100% - 114px); max-width: 1140px; margin: 0 auto; }
.nav-items { display: flex; }

.nav-items a {
  display: flex;
  align-items: center;
  gap: 4px;
  height: 50px;
  padding: 0 15px;
  color: #9d9d9d;
}

.nav-items .active { background: #080808; color: #fff; }

h1 {
  margin: 40px 0 10px;
  padding-left: 30px;
  text-align: center;
  font-size: 31px;
  font-weight: 400;
  line-height: 33px;
  -webkit-text-stroke: 1px #333;
}

.map { position: relative; height: 650px; overflow: hidden; font-family: Roboto, sans-serif; }
.map-canvas { width: 100%; height: 100%; }

.map text { paint-order: stroke; stroke-linejoin: round; }
.poi { font-size: 13px; fill: #858b50; stroke: #e6edab; stroke-width: 3px; }
.river { font-size: 10px; fill: #5a8fc4; }
.district { font-size: 9px; font-weight: 700; fill: #47522a; stroke: #fff; stroke-width: 4px; }
.town { font-size: 13px; fill: #4d5433; stroke: #fff; stroke-width: 4px; }
.city { font-size: 21px; font-weight: 500; fill: #47522a; stroke: #fff; stroke-width: 4px; }

.map-types, .control {
  position: absolute;
  background: #fff;
  border: 0;
  border-radius: 2px;
  box-shadow: 0 1px 4px rgba(0, 0, 0, .3);
}

.map-types { top: 10px; left: 10px; display: flex; height: 40px; font-size: 18px; }
.map-types button { padding: 0 17px; border: 0; background: none; color: #565656; }
.map-types .on { border-right: 1px solid #e6e6e6; color: #000; font-weight: 500; }

.control { right: 10px; width: 40px; height: 40px; padding: 0; display: flex; align-items: center; justify-content: center; }
.fullscreen { top: 10px; }
.pegman { bottom: 137px; }
.zoom { bottom: 24px; height: 81px; flex-direction: column; }
.zoom button { flex: 1; width: 30px; padding: 0 6px; border: 0; background: none; }
.zoom button + button { border-top: 1px solid #e6e6e6; }

.google {
  position: absolute;
  left: 7px;
  bottom: 2px;
  color: #fff;
  font: 700 19px/24px Lato, sans-serif;
  text-shadow: 0 0 2px rgba(0, 0, 0, .4);
}

.attribution {
  position: absolute;
  right: 0;
  bottom: 0;
  display: flex;
  gap: 12px;
  padding: 0 6px 0 5px;
  background: rgba(245, 245, 245, .7);
  color: #444;
  font-size: 10px;
  line-height: 14px;
}

.btn {
  display: block;
  height: 34px;
  padding: 0 12px;
  border: 1px solid #5ab5d8;
  border-radius: 4px;
  background: #70bfde;
  color: #fff;
}
```
